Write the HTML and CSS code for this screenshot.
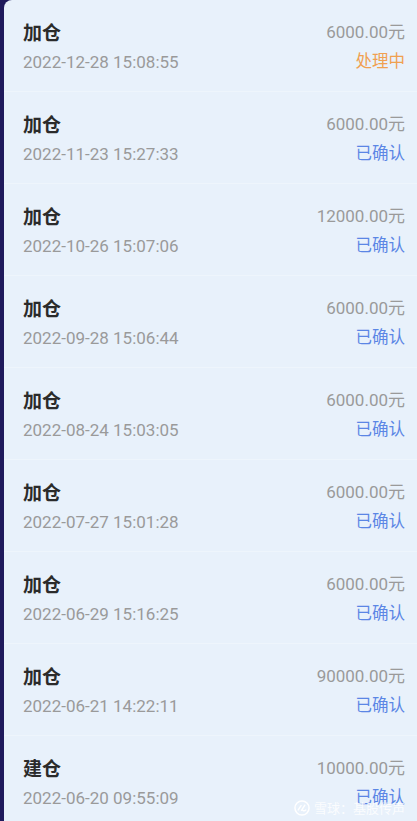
FILE: index.html
```html
<!DOCTYPE html>
<html>
<head>
  <title>交易记录</title>
  <link rel="stylesheet" href="styles.css">
</head>
<body>
  <div class="sheet">
    <ul class="records">
      <li class="record">
        <div class="left"><div class="kind">加仓</div><div class="time">2022-12-28 15:08:55</div></div>
        <div class="right"><div class="amount">6000.00元</div><div class="status pending">处理中</div></div>
      </li>
      <li class="record">
        <div class="left"><div class="kind">加仓</div><div class="time">2022-11-23 15:27:33</div></div>
        <div class="right"><div class="amount">6000.00元</div><div class="status">已确认</div></div>
      </li>
      <li class="record">
        <div class="left"><div class="kind">加仓</div><div class="time">2022-10-26 15:07:06</div></div>
        <div class="right"><div class="amount">12000.00元</div><div class="status">已确认</div></div>
      </li>
      <li class="record">
        <div class="left"><div class="kind">加仓</div><div class="time">2022-09-28 15:06:44</div></div>
        <div class="right"><div class="amount">6000.00元</div><div class="status">已确认</div></div>
      </li>
      <li class="record">
        <div class="left"><div class="kind">加仓</div><div class="time">2022-08-24 15:03:05</div></div>
        <div class="right"><div class="amount">6000.00元</div><div class="status">已确认</div></div>
      </li>
      <li class="record">
        <div class="left"><div class="kind">加仓</div><div class="time">2022-07-27 15:01:28</div></div>
        <div class="right"><div class="amount">6000.00元</div><div class="status">已确认</div></div>
      </li>
      <li class="record">
        <div class="left"><div class="kind">加仓</div><div class="time">2022-06-29 15:16:25</div></div>
        <div class="right"><div class="amount">6000.00元</div><div class="status">已确认</div></div>
      </li>
      <li class="record">
        <div class="left"><div class="kind">加仓</div><div class="time">2022-06-21 14:22:11</div></div>
        <div class="right"><div class="amount">90000.00元</div><div class="status">已确认</div></div>
      </li>
      <li class="record">
        <div class="left"><div class="kind">建仓</div><div class="time">2022-06-20 09:55:09</div></div>
        <div class="right"><div class="amount">10000.00元</div><div class="status">已确认</div></div>
      </li>
    </ul>
  </div>
  <div class="watermark">
    <svg width="16" height="16" viewBox="0 0 17 17">
      <circle cx="8.5" cy="8.5" r="7.5" fill="none" stroke="#fff" stroke-width="1.6"/>
      <path d="M4.5 10.5 L7.5 6 M8 11 L11.5 5.5 M9.5 11 Q11 12 12.5 10.5" fill="none" stroke="#fff" stroke-width="1.5" stroke-linecap="round"/>
    </svg>
    <span>雪球：基股传声</span>
  </div>
</body>
</html>
```

FILE: styles.css
```css
html, body {
  margin: 0;
  padding: 0;
}
body {
  background: #1f1a5c;
  font-family: Roboto, "Noto Sans CJK SC", sans-serif;
  height: 821px;
  overflow: hidden;
  position: relative;
}
.sheet {
  margin-left: 4px;
  background: #e8f1fb;
  border-top-left-radius: 8px;
  height: 821px;
}
.records {
  list-style: none;
  margin: 0;
  padding: 0;
}
.record {
  display: flex;
  justify-content: space-between;
  height: 91px;
  padding: 0 12px 0 19px;
  border-bottom: 1px solid #eef5fc;
}
.left, .right {
  display: flex;
  flex-direction: column;
}
.left {
  padding-top: 21px;
}
.right {
  align-items: flex-end;
  padding-top: 20px;
}
.kind {
  font-size: 19px;
  line-height: 26px;
  font-weight: bold;
  color: #2b2b2b;
}
.time {
  margin-top: 3px;
  font-size: 17px;
  line-height: 24px;
  color: #9a9a9a;
}
.amount {
  font-size: 17px;
  line-height: 24px;
  color: #9a9a9a;
}
.status {
  margin-top: 6px;
  font-size: 16.5px;
  line-height: 24px;
  color: #5b86e5;
}
.status.pending {
  color: #f0a050;
}
.watermark {
  position: absolute;
  right: 12px;
  bottom: 4px;
  display: flex;
  align-items: center;
  gap: 4px;
  color: rgba(255, 255, 255, 0.85);
  font-size: 13px;
}
```
